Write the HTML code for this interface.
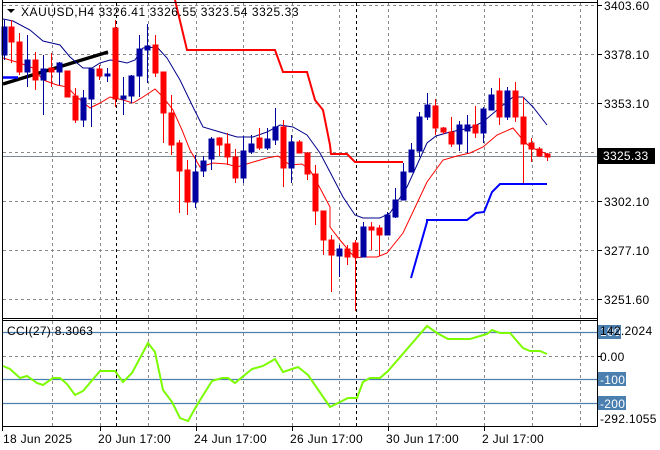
<!DOCTYPE html>
<html><head><meta charset="utf-8"><style>
html,body{margin:0;padding:0;background:#fff;}
svg{display:block;font-family:"Liberation Sans",sans-serif;}
text{letter-spacing:0.3px;}
</style></head><body>
<svg width="660" height="450" viewBox="0 0 660 450" xmlns="http://www.w3.org/2000/svg">
<rect width="660" height="450" fill="#fff"/>
<g stroke="#8a8a8a" stroke-dasharray="3,3" stroke-width="1">
<line x1="52.5" y1="3" x2="52.5" y2="426"/><line x1="100.5" y1="3" x2="100.5" y2="426"/><line x1="148.5" y1="3" x2="148.5" y2="426"/><line x1="196.5" y1="3" x2="196.5" y2="426"/><line x1="243.5" y1="3" x2="243.5" y2="426"/><line x1="292.5" y1="3" x2="292.5" y2="426"/><line x1="339.5" y1="3" x2="339.5" y2="426"/><line x1="388.5" y1="3" x2="388.5" y2="426"/><line x1="436.5" y1="3" x2="436.5" y2="426"/><line x1="484.5" y1="3" x2="484.5" y2="426"/><line x1="532.5" y1="3" x2="532.5" y2="426"/><line x1="580.5" y1="3" x2="580.5" y2="426"/>
<line x1="3" y1="5.5" x2="597" y2="5.5"/><line x1="3" y1="54.5" x2="597" y2="54.5"/><line x1="3" y1="103.5" x2="597" y2="103.5"/><line x1="3" y1="152.5" x2="597" y2="152.5"/><line x1="3" y1="201.5" x2="597" y2="201.5"/><line x1="3" y1="250.5" x2="597" y2="250.5"/><line x1="3" y1="299.5" x2="597" y2="299.5"/>
<line x1="3" y1="356.5" x2="597" y2="356.5"/>
</g>
<g stroke="#000" stroke-dasharray="3,3" stroke-width="1">
<line x1="116.5" y1="3" x2="116.5" y2="426"/><line x1="356.5" y1="3" x2="356.5" y2="426"/>
</g>
<line x1="3" y1="156.5" x2="597" y2="156.5" stroke="#7b8a99" stroke-width="1"/>
<g stroke="#4a7fb0" stroke-width="1.2">
<line x1="3" y1="332.5" x2="597" y2="332.5"/><line x1="3" y1="379.5" x2="597" y2="379.5"/><line x1="3" y1="403.5" x2="597" y2="403.5"/>
</g>
<line x1="3" y1="84" x2="108" y2="52" stroke="#000" stroke-width="3.5"/>
<line x1="3" y1="77.5" x2="18" y2="77.5" stroke="#0000ff" stroke-width="2.5"/>
<polyline fill="none" stroke="#ff0000" stroke-width="2" points="175,0 187,50 275,50 283,72 307,72 315,100 323,110 330,145 331,154 347,154 355,162 403,162"/>
<polyline fill="none" stroke="#0000ff" stroke-width="2" points="411,278 427,222 427,220 467,220 476,213 484,212 492,192 500,184 547,184"/>
<polyline fill="none" stroke="#00008b" stroke-width="1" points="3,19 13,21 30,30 43,41 60,45 70,57 83,68 92,68 100,63 110,60 118,61 127,63 135,60 143,48 157,47 167,58 180,80 193,107 203,127 220,132 237,137 253,137 267,132 280,125 293,127 307,135 320,153 330,172 343,197 355,215 363,218 380,218 390,213 407,187 427,143 436,136 450,132 470,128 483,122 497,110 513,97 523,97 533,107 547,125"/>
<polyline fill="none" stroke="#ff0000" stroke-width="1" points="3,58 20,63 33,68 43,80 57,85 67,87 77,97 90,108 100,103 110,97 123,100 133,103 143,97 155,89 163,97 173,110 182,130 190,150 200,167 213,163 227,164 237,167 250,163 267,158 278,156 290,165 302,164 310,170 320,188 330,207 330,227 340,240 355,258 363,257 377,257 387,253 403,233 427,182 443,160 457,156 470,153 483,147 497,135 513,128 523,140 530,147 547,154"/>
<g stroke-width="1">
<g stroke="#0000a0" fill="#0000a0">
<line x1="4.5" y1="20" x2="4.5" y2="60"/><rect x="2" y="27" width="5" height="28"/>
<line x1="27.5" y1="35" x2="27.5" y2="87"/><rect x="25" y="60" width="5" height="12"/>
<line x1="43.5" y1="55" x2="43.5" y2="115"/><rect x="41" y="69" width="5" height="11"/>
<line x1="59.5" y1="62" x2="59.5" y2="85"/><rect x="57" y="63" width="5" height="9"/>
<line x1="83.5" y1="90" x2="83.5" y2="127"/><rect x="81" y="98" width="5" height="22"/>
<line x1="91.5" y1="68" x2="91.5" y2="127"/><rect x="89" y="69" width="5" height="30"/>
<line x1="107.5" y1="68" x2="107.5" y2="82"/><rect x="105" y="74" width="5" height="2"/>
<line x1="123.5" y1="77" x2="123.5" y2="115"/><rect x="121" y="96" width="5" height="3"/>
<line x1="131.5" y1="75" x2="131.5" y2="103"/><rect x="129" y="76" width="5" height="20"/>
<line x1="139.5" y1="35" x2="139.5" y2="97"/><rect x="137" y="49" width="5" height="27"/>
<line x1="147.5" y1="24" x2="147.5" y2="83"/><rect x="145" y="46" width="5" height="4"/>
<line x1="195.5" y1="155" x2="195.5" y2="208"/><rect x="193" y="172" width="5" height="30"/>
<line x1="203.5" y1="156" x2="203.5" y2="177"/><rect x="201" y="161" width="5" height="10"/>
<line x1="211.5" y1="137" x2="211.5" y2="170"/><rect x="209" y="139" width="5" height="20"/>
<line x1="243.5" y1="136" x2="243.5" y2="183"/><rect x="241" y="151" width="5" height="27"/>
<line x1="251.5" y1="135" x2="251.5" y2="154"/><rect x="249" y="144" width="5" height="8"/>
<line x1="267.5" y1="128" x2="267.5" y2="150"/><rect x="265" y="139" width="5" height="9"/>
<line x1="275.5" y1="108" x2="275.5" y2="145"/><rect x="273" y="127" width="5" height="13"/>
<line x1="291.5" y1="135" x2="291.5" y2="183"/><rect x="289" y="142" width="5" height="26"/>
<line x1="339.5" y1="245" x2="339.5" y2="277"/><rect x="337" y="249" width="5" height="7"/>
<line x1="363.5" y1="222" x2="363.5" y2="257"/><rect x="361" y="227" width="5" height="30"/>
<line x1="387.5" y1="212" x2="387.5" y2="235"/><rect x="385" y="215" width="5" height="20"/>
<line x1="395.5" y1="188" x2="395.5" y2="218"/><rect x="393" y="200" width="5" height="17"/>
<line x1="403.5" y1="163" x2="403.5" y2="200"/><rect x="401" y="172" width="5" height="28"/>
<line x1="411.5" y1="143" x2="411.5" y2="172"/><rect x="409" y="150" width="5" height="22"/>
<line x1="419.5" y1="112" x2="419.5" y2="157"/><rect x="417" y="117" width="5" height="34"/>
<line x1="427.5" y1="93" x2="427.5" y2="120"/><rect x="425" y="105" width="5" height="12"/>
<line x1="459.5" y1="121" x2="459.5" y2="151"/><rect x="457" y="125" width="5" height="19"/>
<line x1="467.5" y1="115" x2="467.5" y2="153"/><rect x="465" y="125" width="5" height="6"/>
<line x1="483.5" y1="107" x2="483.5" y2="143"/><rect x="481" y="109" width="5" height="24"/>
<line x1="491.5" y1="88" x2="491.5" y2="110"/><rect x="489" y="95" width="5" height="15"/>
<line x1="507.5" y1="87" x2="507.5" y2="120"/><rect x="505" y="91" width="5" height="26"/>
</g>
<g stroke="#ff0000" fill="#ff0000">
<line x1="11.5" y1="20" x2="11.5" y2="63"/><rect x="9" y="27" width="5" height="15"/>
<line x1="19.5" y1="33" x2="19.5" y2="75"/><rect x="17" y="42" width="5" height="30"/>
<line x1="35.5" y1="52" x2="35.5" y2="90"/><rect x="33" y="60" width="5" height="20"/>
<line x1="51.5" y1="53" x2="51.5" y2="87"/><rect x="49" y="68" width="5" height="4"/>
<line x1="67.5" y1="71" x2="67.5" y2="97"/><rect x="65" y="71" width="5" height="26"/>
<line x1="75.5" y1="88" x2="75.5" y2="123"/><rect x="73" y="96" width="5" height="24"/>
<line x1="99.5" y1="65" x2="99.5" y2="80"/><rect x="97" y="69" width="5" height="7"/>
<line x1="115.5" y1="20" x2="115.5" y2="107"/><rect x="113" y="28" width="5" height="71"/>
<line x1="155.5" y1="35" x2="155.5" y2="77"/><rect x="153" y="45" width="5" height="28"/>
<line x1="163.5" y1="72" x2="163.5" y2="143"/><rect x="161" y="72" width="5" height="41"/>
<line x1="171.5" y1="95" x2="171.5" y2="155"/><rect x="169" y="113" width="5" height="32"/>
<line x1="179.5" y1="140" x2="179.5" y2="213"/><rect x="177" y="143" width="5" height="28"/>
<line x1="187.5" y1="160" x2="187.5" y2="215"/><rect x="185" y="170" width="5" height="32"/>
<line x1="219.5" y1="137" x2="219.5" y2="156"/><rect x="217" y="138" width="5" height="7"/>
<line x1="227.5" y1="133" x2="227.5" y2="165"/><rect x="225" y="144" width="5" height="13"/>
<line x1="235.5" y1="149" x2="235.5" y2="183"/><rect x="233" y="157" width="5" height="21"/>
<line x1="259.5" y1="128" x2="259.5" y2="150"/><rect x="257" y="138" width="5" height="10"/>
<line x1="283.5" y1="120" x2="283.5" y2="187"/><rect x="281" y="127" width="5" height="41"/>
<line x1="299.5" y1="140" x2="299.5" y2="153"/><rect x="297" y="142" width="5" height="11"/>
<line x1="307.5" y1="152" x2="307.5" y2="180"/><rect x="305" y="153" width="5" height="21"/>
<line x1="315.5" y1="165" x2="315.5" y2="225"/><rect x="313" y="174" width="5" height="37"/>
<line x1="323.5" y1="211" x2="323.5" y2="255"/><rect x="321" y="211" width="5" height="29"/>
<line x1="331.5" y1="235" x2="331.5" y2="292"/><rect x="329" y="240" width="5" height="15"/>
<line x1="347.5" y1="245" x2="347.5" y2="265"/><rect x="345" y="249" width="5" height="8"/>
<line x1="355.5" y1="240" x2="355.5" y2="311"/><rect x="353" y="243" width="5" height="14"/>
<line x1="371.5" y1="222" x2="371.5" y2="250"/><rect x="369" y="227" width="5" height="3"/>
<line x1="379.5" y1="225" x2="379.5" y2="256"/><rect x="377" y="228" width="5" height="7"/>
<line x1="435.5" y1="99" x2="435.5" y2="135"/><rect x="433" y="106" width="5" height="22"/>
<line x1="443.5" y1="127" x2="443.5" y2="134"/><rect x="441" y="128" width="5" height="4"/>
<line x1="451.5" y1="117" x2="451.5" y2="147"/><rect x="449" y="132" width="5" height="12"/>
<line x1="475.5" y1="106" x2="475.5" y2="138"/><rect x="473" y="125" width="5" height="8"/>
<line x1="499.5" y1="78" x2="499.5" y2="125"/><rect x="497" y="91" width="5" height="26"/>
<line x1="515.5" y1="82" x2="515.5" y2="122"/><rect x="513" y="91" width="5" height="26"/>
<line x1="523.5" y1="97" x2="523.5" y2="183"/><rect x="521" y="117" width="5" height="27"/>
<line x1="531.5" y1="138" x2="531.5" y2="162"/><rect x="529" y="143" width="5" height="6"/>
<line x1="539.5" y1="147" x2="539.5" y2="157"/><rect x="537" y="149" width="5" height="7"/>
<line x1="547.5" y1="153" x2="547.5" y2="161"/><rect x="545" y="154" width="5" height="3"/>
</g>
</g>
<polyline fill="none" stroke="#7cfc00" stroke-width="2" points="3,366 10,369 20,378 27,376 37,383 43,385 53,378 60,378 67,384 75,395 83,391 100,371 115,371 123,382 132,373 148,343 155,352 163,390 172,402 180,418 188,421 197,405 212,381 222,378 228,378 235,383 252,369 263,366 275,359 283,372 298,367 308,375 317,388 330,407 340,402 348,398 357,398 363,382 370,378 380,378 388,371 427,326 437,333 448,339 470,339 487,334 492,330 500,333 510,333 523,348 530,351 540,351 547,354"/>
<rect x="2.5" y="2.5" width="595" height="316" fill="none" stroke="#000" stroke-width="1"/>
<rect x="2.5" y="320.5" width="595" height="106" fill="none" stroke="#000" stroke-width="1"/>
<rect x="598" y="0" width="62" height="450" fill="#fff"/>
<rect x="0" y="427" width="660" height="23" fill="#fff"/>
<line x1="2.5" y1="0" x2="2.5" y2="431" stroke="#000"/>
<line x1="597.5" y1="0" x2="597.5" y2="427" stroke="#000"/>
<line x1="2" y1="426.5" x2="598" y2="426.5" stroke="#000"/>
<g stroke="#000">
<line x1="598" y1="5.5" x2="602" y2="5.5"/><line x1="598" y1="54.5" x2="602" y2="54.5"/><line x1="598" y1="103.5" x2="602" y2="103.5"/><line x1="598" y1="201.5" x2="602" y2="201.5"/><line x1="598" y1="250.5" x2="602" y2="250.5"/><line x1="598" y1="299.5" x2="602" y2="299.5"/><line x1="598" y1="356.5" x2="602" y2="356.5"/>
<line x1="100.5" y1="427" x2="100.5" y2="431"/><line x1="196.5" y1="427" x2="196.5" y2="431"/><line x1="292.5" y1="427" x2="292.5" y2="431"/><line x1="388.5" y1="427" x2="388.5" y2="431"/><line x1="484.5" y1="427" x2="484.5" y2="431"/>
</g>
<g font-size="12" fill="#000">
<text x="604" y="10">3403.60</text>
<text x="604" y="59">3378.10</text>
<text x="604" y="108">3353.10</text>
<text x="604" y="206">3302.10</text>
<text x="604" y="255">3277.10</text>
<text x="604" y="304">3251.60</text>
</g>
<rect x="598" y="148" width="57" height="16" fill="#000"/>
<text x="603" y="160" font-size="12" fill="#fff">3325.33</text>
<rect x="598" y="325" width="23" height="14" fill="#4a7fb0"/>
<text x="600" y="336" font-size="12" fill="#fff">100</text>
<text x="600" y="335" font-size="12" fill="#000">142.2024</text>
<text x="600" y="361" font-size="12" fill="#000">0.00</text>
<rect x="598" y="372" width="28" height="14" fill="#4a7fb0"/>
<text x="600" y="384" font-size="12" fill="#fff">-100</text>
<rect x="598" y="396" width="28" height="14" fill="#4a7fb0"/>
<text x="600" y="408" font-size="12" fill="#fff">-200</text>
<text x="600" y="423" font-size="12" fill="#000">-292.1055</text>
<text x="7" y="335" font-size="12" fill="#000">CCI(27) 8.3063</text>
<path d="M7 9 L15 9 L11 13 Z" fill="#000"/>
<text x="21" y="16" font-size="12" fill="#000" style="letter-spacing:0.55px">XAUUSD,H4  3326.41 3326.55 3323.54 3325.33</text>
<g font-size="12" fill="#000">
<text x="3" y="443">18 Jun 2025</text>
<text x="98" y="443">20 Jun 17:00</text>
<text x="194" y="443">24 Jun 17:00</text>
<text x="290" y="443">26 Jun 17:00</text>
<text x="386" y="443">30 Jun 17:00</text>
<text x="482" y="443">2 Jul 17:00</text>
</g>
</svg>
</body></html>
